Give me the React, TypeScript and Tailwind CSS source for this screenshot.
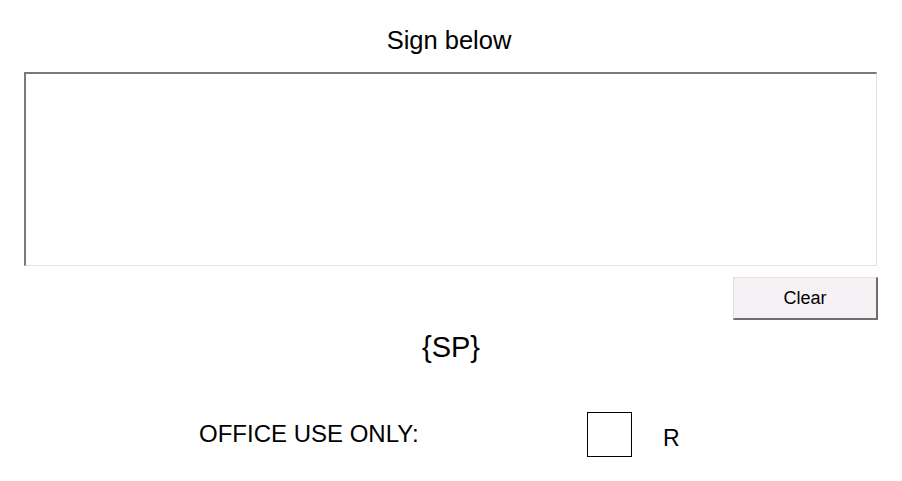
import React from "react";

export default function App() {
  return (
    <div
      className="w-[902px] h-[481px] bg-white text-black flex flex-col"
      style={{ fontFamily: '"Liberation Sans", Arial, sans-serif' }}
    >
      <div className="pt-[25px] pr-[4px] text-center text-[25.5px] leading-[30px]">Sign below</div>
      <div className="mt-[17px] ml-[24px] w-[853px] h-[194px] bg-white border-t-2 border-l-2 border-t-[#7a7a7a] border-l-[#7a7a7a] border-r border-b border-r-[#e4e0e4] border-b-[#e4e0e4]" />
      <div className="mt-[11px] flex justify-end pr-[24px]">
        <button className="w-[145px] h-[43px] bg-[#f5f1f5] border-t border-l border-t-[#e4e0e4] border-l-[#e4e0e4] border-r-2 border-b-2 border-r-[#6e6e6e] border-b-[#6e6e6e] text-[18px] leading-[20px] text-black flex items-center justify-center">
          Clear
        </button>
      </div>
      <div className="mt-[10px] text-center text-[29px] leading-[34px]">{"{SP}"}</div>
      <div className="mt-[48px] flex items-start">
        <div className="ml-[199px] w-[388px] mt-[8px] text-[24px] leading-[27px] whitespace-nowrap">OFFICE USE ONLY:</div>
        <div className="w-[45px] h-[45px] border border-black shrink-0" />
        <div className="ml-[31px] mt-[13px] text-[23px] leading-[27px]">R</div>
      </div>
    </div>
  );
}
